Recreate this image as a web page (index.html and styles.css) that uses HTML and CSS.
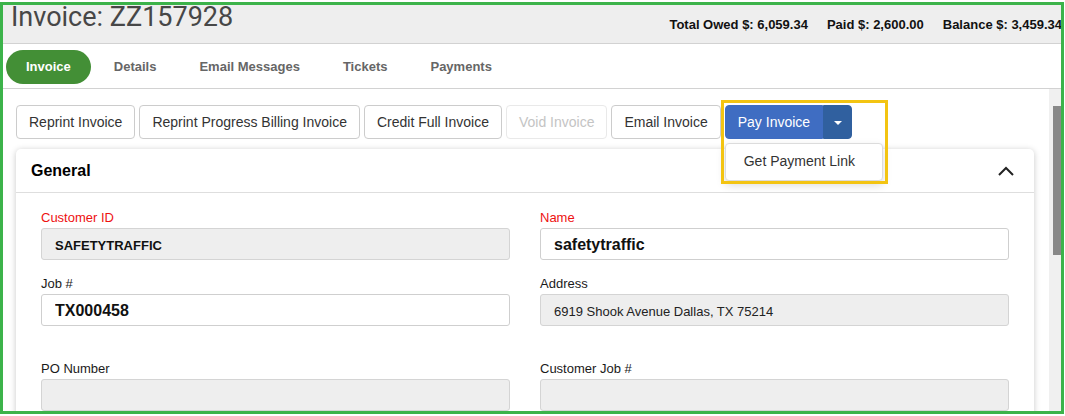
FILE: index.html
```html
<!DOCTYPE html>
<html lang="en">
  <head>
    <meta charset="UTF-8" />
    <meta name="viewport" content="width=device-width, initial-scale=1.0" />
    <title>Invoice: ZZ157928</title>
    <link rel="stylesheet" href="styles.css">
  </head>

  <body>
    <div class="app">
      <header class="top-bar">
        <h1 class="title">Invoice: ZZ157928</h1>
        <div class="totals">
          <span>Total Owed $: 6,059.34</span>
          <span>Paid $: 2,600.00</span>
          <span>Balance $: 3,459.34</span>
        </div>
      </header>

      <nav class="tabs">
        <a class="tab active">Invoice</a>
        <a class="tab">Details</a>
        <a class="tab">Email Messages</a>
        <a class="tab">Tickets</a>
        <a class="tab">Payments</a>
      </nav>

      <div class="content">
        <div class="scroll-body">
          <div class="actions">
            <button class="btn">Reprint Invoice</button>
            <button class="btn">Reprint Progress Billing Invoice</button>
            <button class="btn">Credit Full Invoice</button>
            <button class="btn" disabled>Void Invoice</button>
            <button class="btn">Email Invoice</button>
            <div class="split">
              <button class="btn primary">Pay Invoice</button>
              <button class="btn primary toggle"><span class="caret"></span></button>
              <ul class="menu">
                <li>Get Payment Link</li>
              </ul>
              <div class="mark"></div>
            </div>
          </div>

          <section class="card">
            <div class="card-head">
              <h2>General</h2>
              <svg class="chevron" width="16" height="10" viewBox="0 0 16 10">
                <polyline points="1,9 8,2 15,9" fill="none" stroke="#222" stroke-width="2" />
              </svg>
            </div>
            <div class="card-body">
              <div class="field">
                <label class="required">Customer ID</label>
                <input class="input locked small" value="SAFETYTRAFFIC" readonly />
              </div>
              <div class="field">
                <label class="required">Name</label>
                <input class="input" value="safetytraffic" />
              </div>
              <div class="field tall">
                <label>Job #</label>
                <input class="input" value="TX000458" />
              </div>
              <div class="field tall">
                <label>Address</label>
                <input class="input locked plain" value="6919 Shook Avenue Dallas, TX 75214" readonly />
              </div>
              <div class="field">
                <label>PO Number</label>
                <input class="input locked" value="" readonly />
              </div>
              <div class="field">
                <label>Customer Job #</label>
                <input class="input locked" value="" readonly />
              </div>
            </div>
          </section>
        </div>
        <div class="scrollbar"><div class="thumb"></div></div>
      </div>
    </div>
    <div class="frame"></div>
  </body>
</html>
```

FILE: styles.css
```css
html,
body {
  padding: 0;
  margin: 0;
  background: #fff;
  font-family: "Liberation Sans", Arial, sans-serif;
  color: #333;
}

.app {
  width: 1062px;
  height: 412px;
  margin-top: 2px;
  overflow: hidden;
  display: flex;
  flex-direction: column;
}

/* title bar */
.top-bar {
  height: 41px;
  flex: none;
  background: #eeeeee;
  border-bottom: 1px solid #d2d2d2;
  display: flex;
  justify-content: space-between;
  align-items: flex-start;
  padding-left: 11px;
  .title {
    margin: 2px 0 0;
    font-family: Roboto, "Liberation Sans", sans-serif;
    font-weight: 400;
    font-size: 27px;
    line-height: 27px;
    color: #474747;
  }
  .totals {
    display: flex;
    gap: 19px;
    margin-top: 15px;
    font-size: 13px;
    line-height: 15px;
    font-weight: bold;
    color: #111;
    white-space: nowrap;
  }
}

/* tab strip */
.tabs {
  height: 44px;
  flex: none;
  border-bottom: 1px solid #d2d2d2;
  display: flex;
  align-items: center;
  gap: 3px;
  padding-left: 6px;
  .tab {
    height: 34px;
    line-height: 33px;
    padding: 0 20px;
    border-radius: 17px;
    font-size: 13px;
    font-weight: bold;
    color: #666;
    margin-top: 1px;
  }
  .active {
    background: #438f36;
    color: #fff;
  }
}

.content {
  flex: 1;
  display: flex;
  min-height: 0;
}

.scroll-body {
  flex: 1;
  padding: 16px 15px 0 16px;
}

.scrollbar {
  width: 13px;
  background: #f0f0f0;
  padding-top: 17px;
  .thumb {
    width: 8px;
    height: 149px;
    margin-left: 4px;
    background: #888;
  }
}

/* action buttons */
.actions {
  display: flex;
  gap: 4px;
  align-items: flex-start;
}

.btn {
  height: 34px;
  padding: 0 12px;
  font-family: "Liberation Sans", Arial, sans-serif;
  font-size: 14px;
  color: #333;
  background: #fff;
  border: 1px solid #ccc;
  border-radius: 4px;
}

.btn:disabled {
  color: #c4c4c4;
  border-color: #e9e9e9;
}

.split {
  position: relative;
  display: flex;
  .primary {
    background: #3f6dc2;
    border-color: #3f6dc2;
    color: #fff;
    border-radius: 4px 0 0 4px;
  }
  .toggle {
    width: 29px;
    padding: 0;
    background: #30609f;
    border-color: #30609f;
    border-radius: 0 4px 4px 0;
  }
  .caret {
    display: inline-block;
    border-top: 4px solid #fff;
    border-left: 4px solid transparent;
    border-right: 4px solid transparent;
    vertical-align: middle;
  }
  .menu {
    position: absolute;
    top: 38px;
    left: 0;
    width: 158px;
    box-sizing: border-box;
    margin: 0;
    padding: 0;
    list-style: none;
    background: #fff;
    border: 1px solid #dcdcdc;
    border-radius: 4px;
    box-shadow: 0 4px 10px rgba(0, 0, 0, 0.15);
    z-index: 3;
    li {
      padding: 7px 18px 9px;
      line-height: 20px;
      font-size: 14px;
      color: #333;
    }
  }
  .mark {
    position: absolute;
    left: -4px;
    top: -5px;
    width: 167px;
    height: 84px;
    box-sizing: border-box;
    border: 3px solid #f3c412;
    z-index: 4;
  }
}

/* general card */
.card {
  margin-top: 10px;
  background: #fff;
  border-radius: 5px;
  box-shadow: 0 1px 6px rgba(0, 0, 0, 0.22);
  .card-head {
    height: 43px;
    border-bottom: 1px solid #dedede;
    display: flex;
    align-items: center;
    justify-content: space-between;
    padding: 0 20px 0 15px;
    h2 {
      margin: 0;
      font-size: 16px;
      font-weight: bold;
      color: #000;
    }
  }
  .card-body {
    padding: 16px 25px 20px;
    display: grid;
    grid-template-columns: 1fr 1fr;
    column-gap: 30px;
  }
}

.field {
  margin-bottom: 15px;
  label {
    display: block;
    font-size: 13px;
    line-height: 18px;
    margin-bottom: 1px;
    color: #1a1a1a;
  }
  .required {
    color: #ee1111;
  }
}

.field.tall {
  margin-bottom: 34px;
}

.input {
  display: block;
  width: 100%;
  height: 32px;
  box-sizing: border-box;
  padding: 2px 13px 0;
  font-family: "Liberation Sans", Arial, sans-serif;
  font-size: 16px;
  font-weight: bold;
  color: #111;
  background: #fff;
  border: 1px solid #cfcfcf;
  border-radius: 3px;
  outline: none;
}

.input.locked {
  background: #eeeeee;
  border-color: #d4d4d4;
}

.input.small {
  font-size: 13px;
}

.input.plain {
  font-size: 13px;
  font-weight: normal;
  color: #222;
}

/* green outline drawn over the whole page */
.frame {
  position: absolute;
  left: 0;
  top: 2px;
  width: 1064px;
  height: 412px;
  box-sizing: border-box;
  border: 3px solid #3cb34a;
  pointer-events: none;
  z-index: 10;
}
```
